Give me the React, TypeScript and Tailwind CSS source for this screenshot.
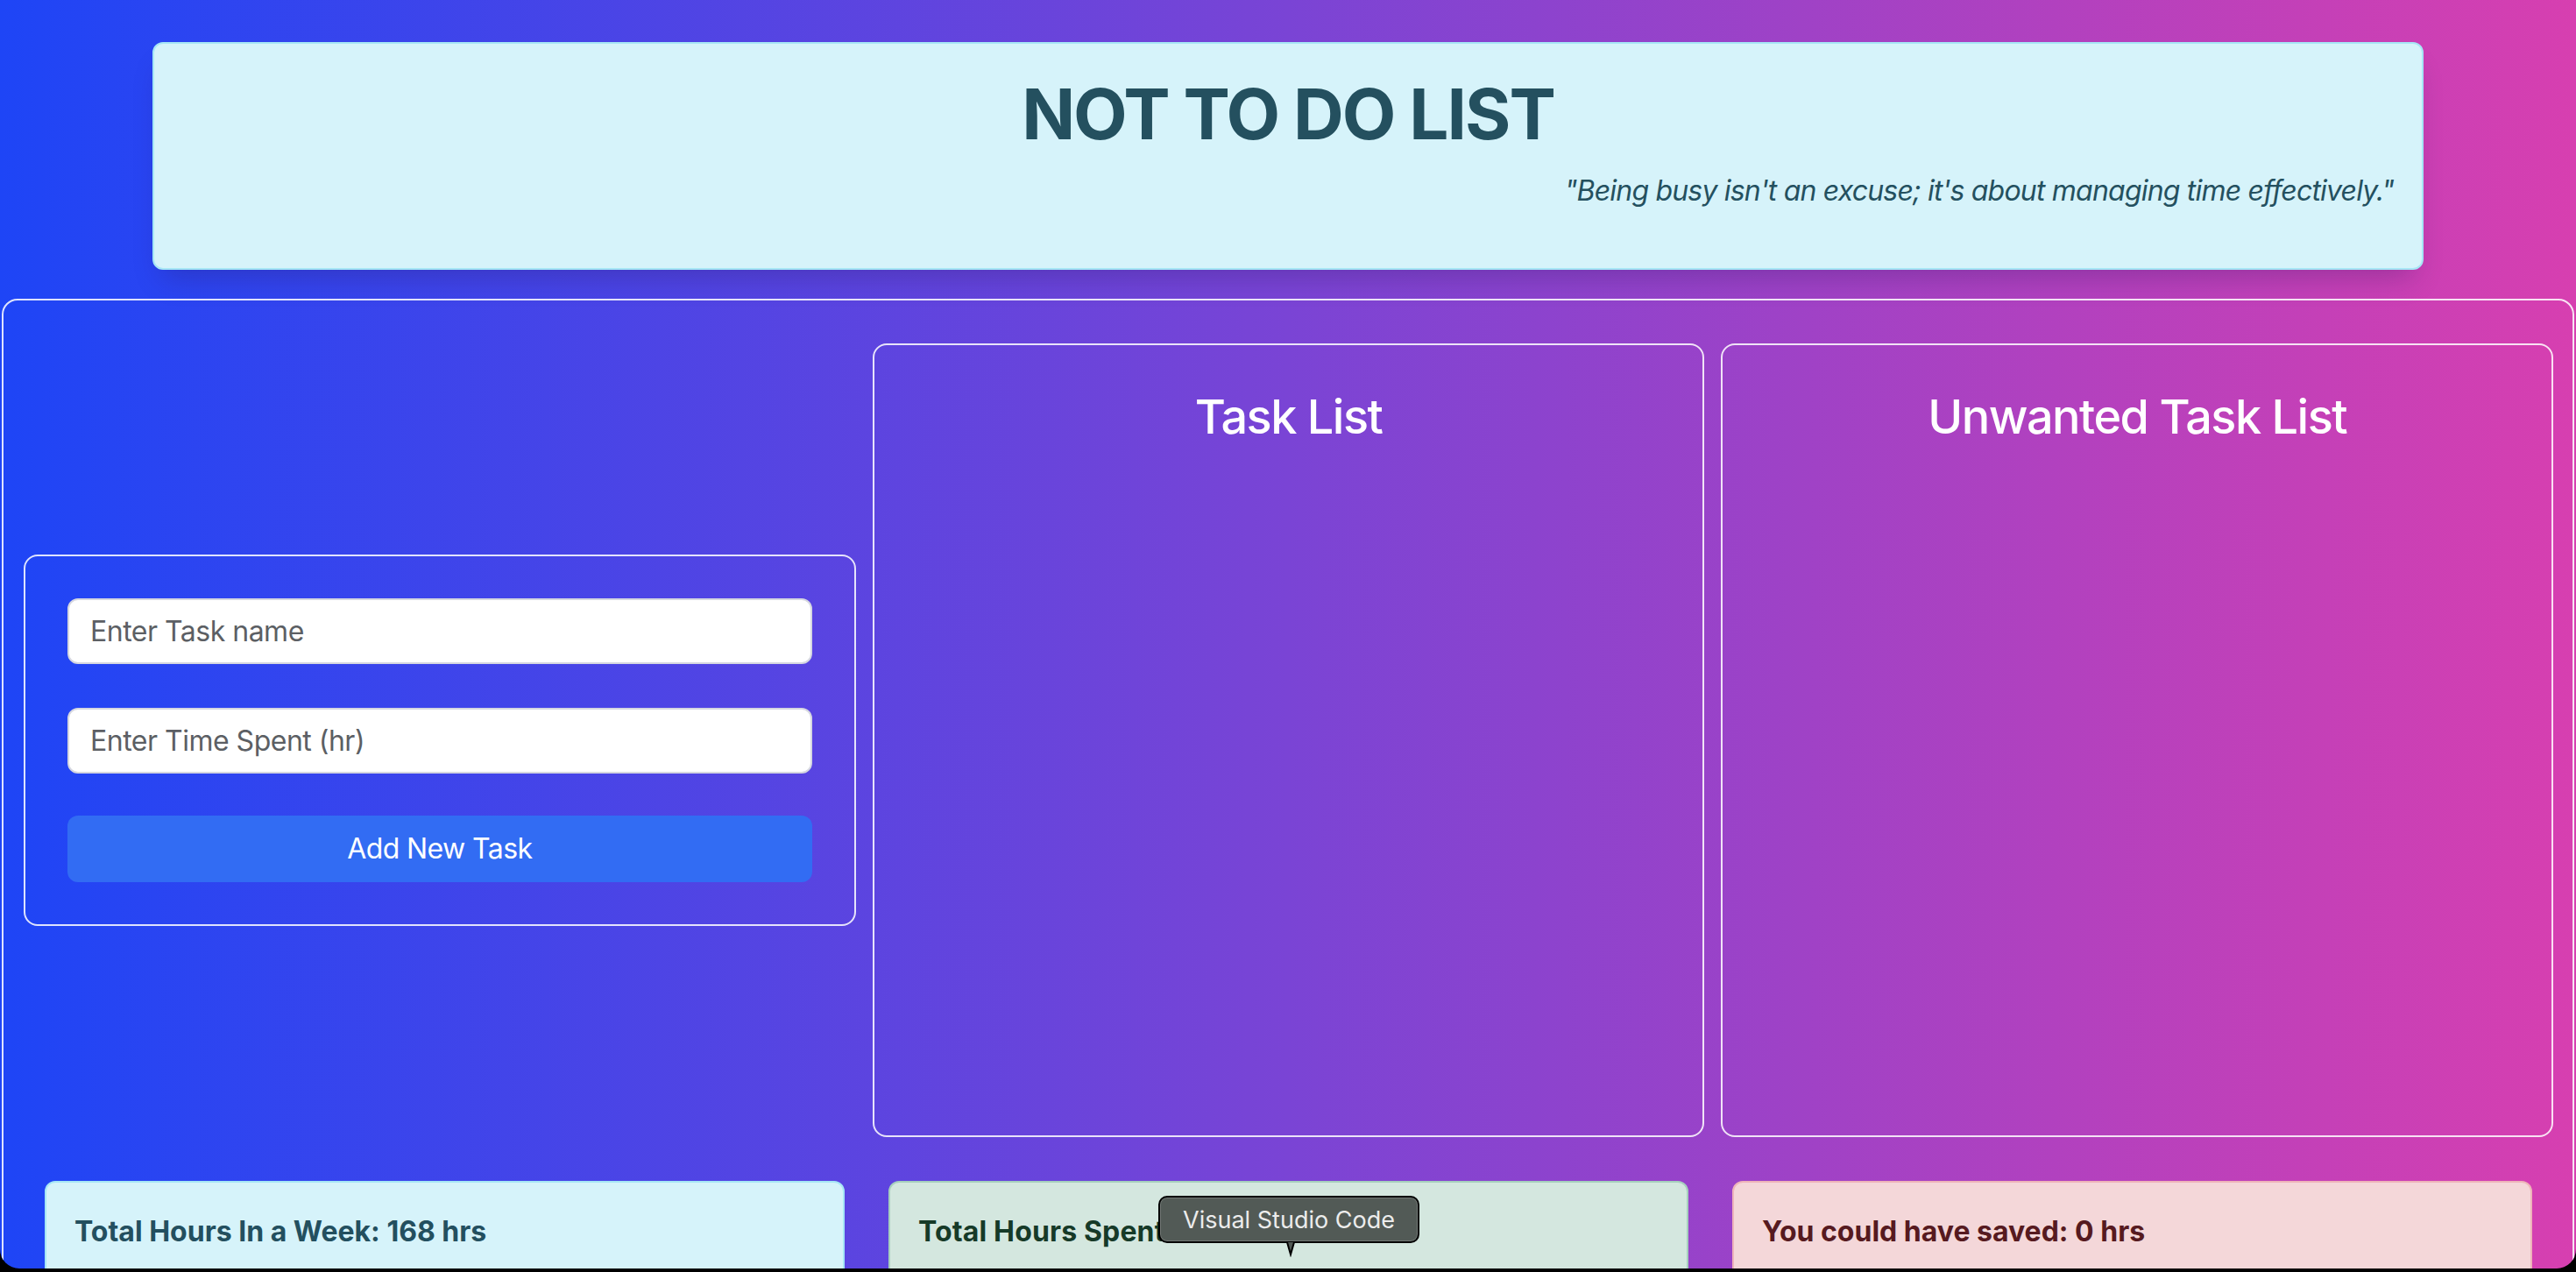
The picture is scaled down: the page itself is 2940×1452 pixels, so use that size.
import React from 'react';

const cards = [
    { label: 'Total Hours In a Week:', value: '168 hrs', box: 'bg-[#d6f3fa] border-[#a6e6f5] text-[#234f5f]' },
    { label: 'Total Hours Spent:', value: '0 hrs', box: 'bg-[linear-gradient(to_bottom,#d4e7df_60%,#c4d6ce)] border-[#a6cfbd] text-[#163a28] tracking-[0.15px]' },
    { label: 'You could have saved:', value: '0 hrs', box: 'bg-[#f4d7d9] border-[#eeb3b9] text-[#561a20]' },
];

const App: React.FC = () => {
    return (
        <div className="relative h-[1452px] overflow-hidden bg-black font-['Inter','Noto_Sans',sans-serif]">
            <div className="h-[1448px] overflow-hidden rounded-b-[22px] bg-[linear-gradient(to_right,#1e45f6,#7a44d5_50%,#d73fb0)]">
                {/* Header */}
                <div className="px-[174px] pt-[48px]">
                    <div className="rounded-[12px] border-2 border-[#a6e6f5] bg-[#d6f3fa] px-[32px] pt-[32px] pb-[64px] text-[#24505f] shadow-[0_20px_30px_-12px_rgba(40,20,90,0.28)]">
                        <h1 className="text-center text-[80px] font-bold leading-[96px] tracking-[-2px]">NOT TO DO LIST</h1>
                        <p className="mt-[16px] text-right text-[32px] italic leading-[48px] tracking-[-0.8px]">
                            "Being busy isn't an excuse; it's about managing time effectively."
                        </p>
                    </div>
                </div>

                {/* Main */}
                <div className="mx-[2px] mt-[33px] rounded-[18px] border-2 border-[rgba(255,255,255,0.85)] pt-[49px]">
                    <div className="grid grid-cols-3 items-center gap-[19px] pl-[23px] pr-[22px]">
                        <div className="rounded-[16px] border-2 border-[rgba(255,255,255,0.85)] p-[48px]">
                            <input
                                className="block h-[75px] w-full rounded-[12px] border-2 border-[#d5d7e0] bg-white px-[24px] text-[32px] tracking-[-0.5px] text-[#212529] outline-none placeholder:text-[#5c5f64]"
                                placeholder="Enter Task name"
                            />
                            <input
                                className="mt-[50px] block h-[75px] w-full rounded-[12px] border-2 border-[#d5d7e0] bg-white px-[24px] text-[32px] tracking-[-0.5px] text-[#212529] outline-none placeholder:text-[#5c5f64]"
                                placeholder="Enter Time Spent (hr)"
                            />
                            <button className="mt-[48px] block h-[76px] w-full rounded-[12px] bg-[#326cf3] text-[32px] tracking-[-0.6px] text-white">
                                Add New Task
                            </button>
                        </div>
                        <div className="h-[906px] rounded-[16px] border-2 border-[rgba(255,255,255,0.85)] pt-[48px]">
                            <h3 className="text-center text-[54px] font-medium leading-[67px] tracking-[-1.5px] text-white">Task List</h3>
                        </div>
                        <div className="h-[906px] rounded-[16px] border-2 border-[rgba(255,255,255,0.85)] pt-[48px]">
                            <h3 className="text-center text-[54px] font-medium leading-[67px] tracking-[-1.5px] text-white">Unwanted Task List</h3>
                        </div>
                    </div>

                    {/* Summary cards */}
                    <div className="mt-[50px] grid grid-cols-3 gap-[50px] pl-[47px] pr-[46px]">
                        {cards.map((card) => (
                            <div key={card.label} className={`h-[160px] rounded-[12px] border-2 p-[32px] ${card.box}`}>
                                <p className="text-[32px] font-bold leading-[48px]">
                                    {card.label} {card.value}
                                </p>
                            </div>
                        ))}
                    </div>
                </div>
            </div>

            {/* Dock tooltip */}
            <div className="absolute left-[1322px] top-[1365px] flex h-[54px] w-[298px] items-center justify-center rounded-[10px] border-2 border-black bg-[#525a56] shadow-[inset_0_0_0_1px_rgba(255,255,255,0.18)]">
                <span className="text-[27px] leading-none text-[#ececec]">Visual Studio Code</span>
                <svg className="absolute left-[134px] top-[50px]" width="30" height="18" viewBox="0 0 30 18">
                    <path d="M0 1 L11 1 L15 15 L19 1 L30 1" fill="#525a56" stroke="black" strokeWidth="2" />
                </svg>
            </div>
        </div>
    );
};

export default App;
